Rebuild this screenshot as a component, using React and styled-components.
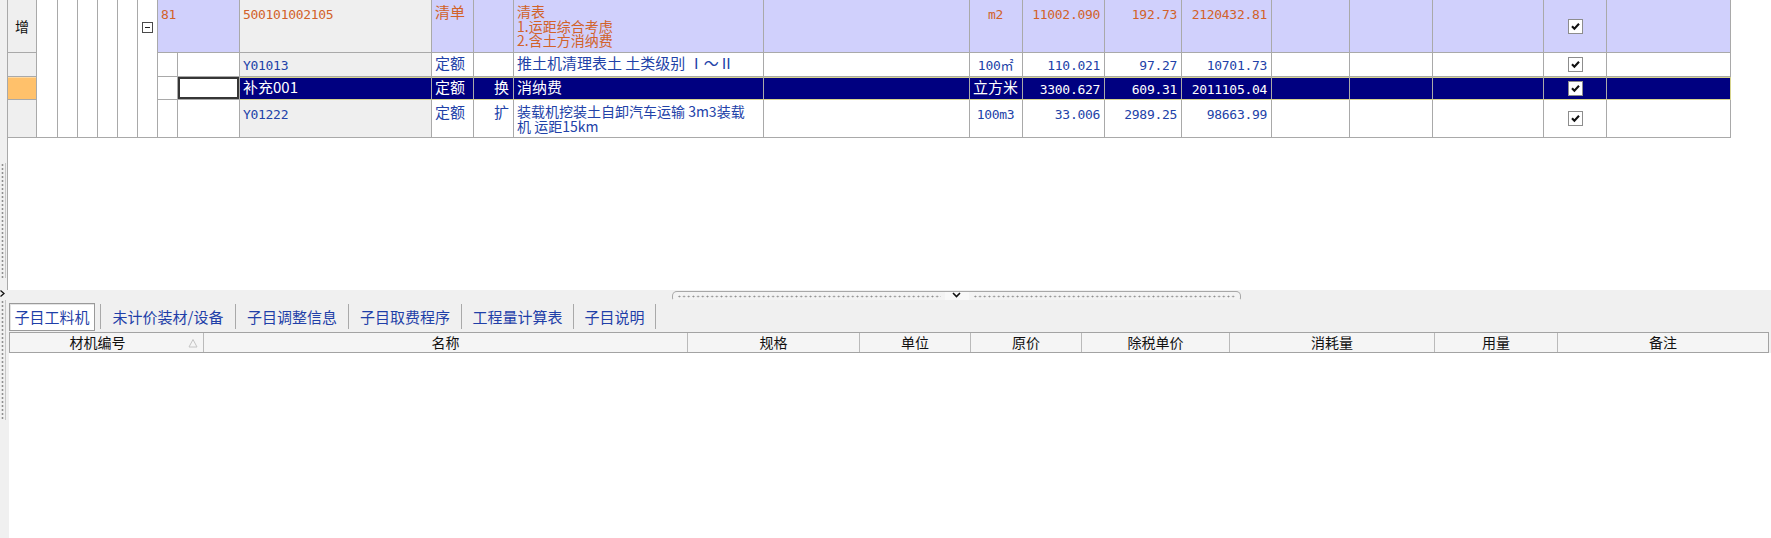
import React from "react";
import styled, { createGlobalStyle, css } from "styled-components";

const LINE = "#a9a9a9";
const BLUE = "#2242a8";
const ORANGE = "#d2622a";
const LAV = "#d0d0fc";
const GREY = "#efefef";
const NAVY = "#000080";
const SEL = "#d6d38c";

const GlobalStyle = createGlobalStyle`
  html, body { margin: 0; padding: 0; background: #fff; }
  body { font-family: "Noto Sans CJK SC", "Noto Sans", sans-serif; }
`;

// column widths of the upper grid, right border included
const COLS = [29, 21, 20, 20, 20, 20, 20, 20, 62, 192, 42, 40, 250, 206, 53, 82, 77, 90, 78, 83, 111, 63, 124];
// columns of the lower (子目工料机) table
const SUB_COLS = [194, 484, 172, 111, 111, 148, 205, 123, 210];

const Screen = styled.div`
  width: 1771px;
  height: 538px;
  display: flex;
  flex-direction: column;
  overflow: hidden;
  background: #fff;
`;

const Pane = styled.div`
  display: flex;
  flex: none;
  height: ${p => p.$h}px;
  background: ${p => p.$bg};
`;

const SideStrip = styled.div`
  flex: none;
  width: ${p => (p.$line ? 7 : 8)}px;
  background: #f0f0f0;
  border-right: ${p => (p.$line ? `1px solid ${LINE}` : "none")};
  display: flex;
  flex-direction: column;
`;

const Grip = styled.div`
  width: 5px;
  height: ${p => p.$h}px;
  margin-top: ${p => p.$top}px;
  border-right: 1px solid #c6c6c6;
  background-image: radial-gradient(circle, #8f8f8f 0.9px, transparent 1.2px);
  background-size: 5px 4px;
`;

const SideArrow = styled.svg`
  display: block;
  width: 5px;
  height: 7px;
`;

const UpperMain = styled.div`
  flex: 1;
  background: #fff;
`;

const Grid = styled.div`
  display: grid;
  grid-template-columns: ${COLS.map(w => `${w}px`).join(" ")};
  grid-template-rows: 53px 24px 23px 38px;
`;

const Cell = styled.div`
  box-sizing: border-box;
  min-width: 0;
  overflow: hidden;
  white-space: nowrap;
  border-right: 1px solid ${LINE};
  border-bottom: 1px solid ${LINE};
  background: ${p => p.$bg || "#fff"};
  color: ${p => p.$fg || BLUE};
  text-align: ${p => p.$align || "left"};
  grid-column: span ${p => p.$span || 1};
  font-size: ${p => p.$fs || 15}px;
  line-height: ${p => p.$lh || 15}px;
  padding: ${p => (p.$pt ?? 2) + (p.$mono ? 3 : 0)}px 4px 0 3px;
  ${p => p.$mono && css`
    font-family: "DejaVu Sans Mono", "Noto Sans CJK SC", monospace;
    font-size: 13px;
    letter-spacing: -0.3px;
  `}
  ${p => p.$sel && css`
    background: ${NAVY};
    color: #fff;
    border-bottom-color: ${SEL};
    box-shadow: inset 0 1px 0 ${SEL};
  `}
  ${p => p.$sel && p.$end && css`
    border-right-color: ${SEL};
  `}
`;

const RowHead = styled.div`
  box-sizing: border-box;
  border-right: 1px solid ${LINE};
  border-bottom: 1px solid ${LINE};
  background: ${p => p.$bg || GREY};
  box-shadow: ${p => (p.$bg ? "inset 0 1px 0 #ffd9a0" : "none")};
  display: flex;
  align-items: center;
  justify-content: center;
  font-size: 14px;
  color: #111;
`;

const TreeCol = styled.div`
  grid-row: span 4;
  box-sizing: border-box;
  border-right: 1px solid ${LINE};
  border-bottom: 1px solid ${LINE};
  background: #fff;
  display: flex;
  justify-content: center;
  align-items: flex-start;
`;

const Collapse = styled.span`
  margin-top: 22px;
  width: 11px;
  height: 11px;
  box-sizing: border-box;
  border: 1px solid #4a4a4a;
  background: #fff;
  display: flex;
  align-items: center;
  justify-content: center;
  &::after {
    content: "";
    width: 5px;
    height: 1px;
    background: #222;
  }
`;

const EditCell = styled(Cell)`
  box-shadow: inset 0 0 0 2px #363636;
`;

const CheckCell = styled(Cell)`
  display: flex;
  align-items: center;
  justify-content: center;
  padding: 0;
`;

const CheckBox = styled.span`
  width: 15px;
  height: 15px;
  box-sizing: border-box;
  border: 1px solid #8d8d8d;
  background: #fff;
  display: flex;
  align-items: center;
  justify-content: center;
`;

const Check = () => (
  <CheckBox>
    <svg width="11" height="11" viewBox="0 0 11 11">
      <path d="M2 5.2 L4.4 7.8 L9 2.8" fill="none" stroke="#111" strokeWidth="2.1" />
    </svg>
  </CheckBox>
);

/* lower pane */

const LowerMain = styled.div`
  flex: 1;
  display: flex;
  flex-direction: column;
`;

const SplitRow = styled.div`
  height: 11px;
  flex: none;
  padding-left: 664px;
`;

const Pill = styled.div`
  width: 569px;
  height: 9px;
  margin-top: 1px;
  box-sizing: border-box;
  border: 1px solid #a8a8a8;
  border-bottom-color: transparent;
  border-radius: 5px 5px 2px 2px;
  background: #f3f3f3;
  display: flex;
  align-items: center;
`;

const Dots = styled.div`
  flex: 1;
  height: 3px;
  margin: 1px 4px 0;
  background-image: radial-gradient(circle, #8c8c8c 0.8px, transparent 1.1px);
  background-size: 4.7px 3px;
`;

const ChevronBox = styled.div`
  width: 24px;
  height: 8px;
  align-self: flex-start;
  background: #f8f8f8;
  display: flex;
  justify-content: center;
`;

const TabStrip = styled.div`
  height: 31px;
  flex: none;
  display: flex;
  align-items: center;
  padding-left: 1px;
`;

const Tab = styled.div`
  width: ${p => p.$w}px;
  flex: none;
  height: 28px;
  display: flex;
  align-items: center;
  &::after {
    content: "";
    width: 1px;
    height: 25px;
    background: #a9a9a9;
  }
`;

const TabLabel = styled.div`
  flex: 1;
  height: 28px;
  box-sizing: border-box;
  display: flex;
  align-items: center;
  justify-content: center;
  font-size: 15px;
  color: #1f3fa8;
  white-space: nowrap;
  ${p => p.$active && css`
    flex: none;
    width: 86px;
    margin-right: 5px;
    border: 1px solid #9a9a9a;
    background: #fff;
    box-shadow: inset 1px 1px 0 #e4e4e4;
  `}
`;

const HeadRow = styled.div`
  flex: none;
  width: 1760px;
  height: 21px;
  margin-left: 1px;
  box-sizing: border-box;
  border: 1px solid #a3a3a3;
  background: #f5f5f5;
  display: grid;
  grid-template-columns: ${SUB_COLS.map(w => `${w}px`).join(" ")};
`;

const HeadCell = styled.div`
  box-sizing: border-box;
  border-right: ${p => (p.$end ? "none" : "1px solid #bababa")};
  display: flex;
  align-items: center;
  justify-content: center;
  font-size: 14px;
  line-height: 19px;
  color: #111;
  white-space: nowrap;
`;

const HeadText = styled.span`
  flex: 1;
  text-align: center;
`;

const SortMark = styled.svg`
  width: 18px;
  height: 10px;
  flex: none;
`;

const Body = styled.div`
  flex: 1;
  margin-left: 1px;
  background: #fff;
`;

const TABS = [
  { label: "子目工料机", w: 92, active: true },
  { label: "未计价装材/设备", w: 135 },
  { label: "子目调整信息", w: 113 },
  { label: "子目取费程序", w: 113 },
  { label: "工程量计算表", w: 112 },
  { label: "子目说明", w: 82 },
];

const HEADS = ["名称", "规格", "单位", "原价", "除税单价", "消耗量", "用量", "备注"];

const r1 = { $bg: LAV, $fg: ORANGE, $pt: 5, $lh: 13.5 };
const r2 = { $pt: 2 };
const r3 = { $pt: 2, $sel: true };
const r4 = { $pt: 4 };

export default function App() {
  return (
    <Screen>
      <GlobalStyle />
      <Pane $h={290} $bg="#fff">
        <SideStrip $line>
          <Grip $top={163} $h={115} />
        </SideStrip>
        <UpperMain>
          <Grid>
            {/* row 1: 清单 */}
            <RowHead>增</RowHead>
            {[0, 1, 2, 3, 4].map(i => <TreeCol key={i} />)}
            <TreeCol><Collapse /></TreeCol>
            <Cell {...r1} $span={2} $mono>81</Cell>
            <Cell {...r1} $bg={GREY} $mono>500101002105</Cell>
            <Cell {...r1}>清单</Cell>
            <Cell {...r1} />
            <Cell {...r1} $fs={14} $lh={14.5} $pt={4}>清表<br />1.运距综合考虑<br />2.含土方消纳费</Cell>
            <Cell {...r1} />
            <Cell {...r1} $mono $align="center">m2</Cell>
            <Cell {...r1} $mono $align="right">11002.090</Cell>
            <Cell {...r1} $mono $align="right">192.73</Cell>
            <Cell {...r1} $mono $align="right">2120432.81</Cell>
            <Cell {...r1} />
            <Cell {...r1} />
            <Cell {...r1} />
            <CheckCell {...r1}><Check /></CheckCell>
            <Cell {...r1} />

            {/* row 2 */}
            <RowHead />
            <Cell />
            <Cell />
            <Cell {...r2} $bg={GREY} $mono>Y01013</Cell>
            <Cell {...r2}>定额</Cell>
            <Cell {...r2} />
            <Cell {...r2}>推土机清理表土 土类级别 Ⅰ～Ⅱ</Cell>
            <Cell {...r2} />
            <Cell {...r2} $mono $align="center">100㎡</Cell>
            <Cell {...r2} $mono $align="right">110.021</Cell>
            <Cell {...r2} $mono $align="right">97.27</Cell>
            <Cell {...r2} $mono $align="right">10701.73</Cell>
            <Cell {...r2} />
            <Cell {...r2} />
            <Cell {...r2} />
            <CheckCell><Check /></CheckCell>
            <Cell {...r2} />

            {/* row 3: selected */}
            <RowHead $bg="#ffc16b" />
            <Cell />
            <EditCell />
            <Cell {...r3}>补充001</Cell>
            <Cell {...r3}>定额</Cell>
            <Cell {...r3} $align="right">换</Cell>
            <Cell {...r3}>消纳费</Cell>
            <Cell {...r3} />
            <Cell {...r3} $align="center">立方米</Cell>
            <Cell {...r3} $mono $align="right">3300.627</Cell>
            <Cell {...r3} $mono $align="right">609.31</Cell>
            <Cell {...r3} $mono $align="right">2011105.04</Cell>
            <Cell {...r3} />
            <Cell {...r3} />
            <Cell {...r3} />
            <CheckCell $sel><Check /></CheckCell>
            <Cell {...r3} $end />

            {/* row 4 */}
            <RowHead />
            <Cell />
            <Cell />
            <Cell {...r4} $bg={GREY} $mono>Y01222</Cell>
            <Cell {...r4}>定额</Cell>
            <Cell {...r4} $align="right">扩</Cell>
            <Cell {...r4} $fs={14} $lh={15}>装载机挖装土自卸汽车运输 3m3装载<br />机 运距15km</Cell>
            <Cell {...r4} />
            <Cell {...r4} $mono $align="center">100m3</Cell>
            <Cell {...r4} $mono $align="right">33.006</Cell>
            <Cell {...r4} $mono $align="right">2989.25</Cell>
            <Cell {...r4} $mono $align="right">98663.99</Cell>
            <Cell {...r4} />
            <Cell {...r4} />
            <Cell {...r4} />
            <CheckCell><Check /></CheckCell>
            <Cell {...r4} />
          </Grid>
        </UpperMain>
      </Pane>

      <Pane $h={248} $bg="#f0f0f0">
        <SideStrip>
          <SideArrow viewBox="0 0 5 7">
            <path d="M0.5 0.5 L4 3.5 L0.5 6.5" fill="none" stroke="#111" strokeWidth="1.3" />
          </SideArrow>
          <Grip $top={3} $h={120} />
        </SideStrip>
        <LowerMain>
          <SplitRow>
            <Pill>
              <Dots />
              <ChevronBox>
                <svg width="9" height="6" viewBox="0 0 9 6">
                  <path d="M1 1 L4.5 4.5 L8 1" fill="none" stroke="#111" strokeWidth="1.6" />
                </svg>
              </ChevronBox>
              <Dots />
            </Pill>
          </SplitRow>
          <TabStrip>
            {TABS.map(t => (
              <Tab key={t.label} $w={t.w}>
                <TabLabel $active={t.active}>{t.label}</TabLabel>
              </Tab>
            ))}
          </TabStrip>
          <HeadRow>
            <HeadCell>
              <HeadText>材机编号</HeadText>
              <SortMark viewBox="0 0 18 10">
                <path d="M4 9 L8 1.5 L12 9 Z" fill="none" stroke="#c4c4c4" strokeWidth="1" />
              </SortMark>
            </HeadCell>
            {HEADS.map((h, i) => (
              <HeadCell key={h} $end={i === HEADS.length - 1}>{h}</HeadCell>
            ))}
          </HeadRow>
          <Body />
        </LowerMain>
      </Pane>
    </Screen>
  );
}
